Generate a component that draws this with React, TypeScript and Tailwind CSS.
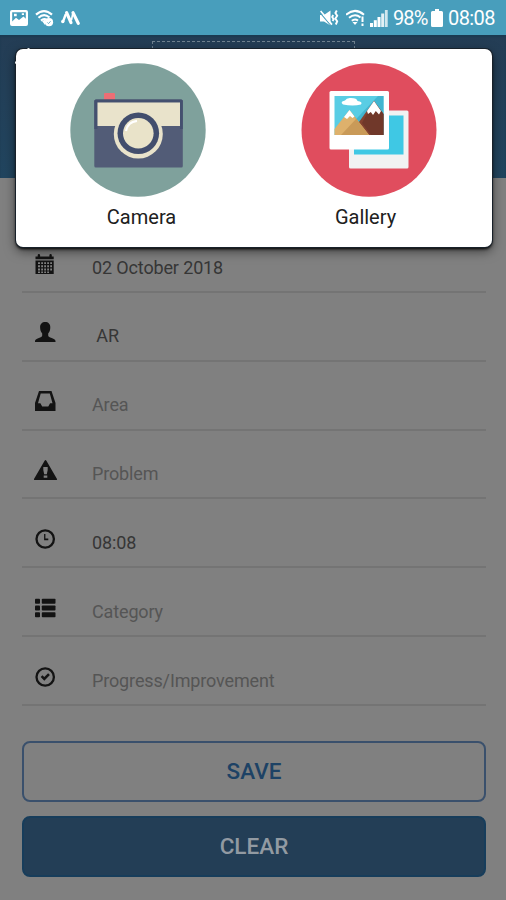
import type { ReactNode } from "react";

interface Field {
  id: string;
  text: string;
  filled: boolean;
  icon: ReactNode;
}

const fields: Field[] = [
  {
    id: "date",
    text: "02 October 2018",
    filled: true,
    icon: (
      <>
        <path d="M.5 2.5H2.7V1.2Q2.7 0 3.9 0T5.1 1.2V2.5H14.4V1.2Q14.4 0 15.6 0T16.8 1.2V2.5H18.7V5.3H.5Z" />
        <path
          fillRule="evenodd"
          d="M.5 6.6H18.7V20H.5ZM3 8.2V10H5V8.2ZM6.2 8.2V10H8V8.2ZM9.2 8.2V10H11V8.2ZM12.2 8.2V10H14V8.2ZM15.2 8.2V10H17V8.2ZM3 11.3V13.2H5V11.3ZM6.2 11.3V13.2H8V11.3ZM9.2 11.3V13.2H11V11.3ZM12.2 11.3V13.2H14V11.3ZM15.2 11.3V13.2H17V11.3ZM3 14.6V16.4H5V14.6ZM6.2 14.6V16.4H8V14.6ZM9.2 14.6V16.4H11V14.6ZM12.2 14.6V16.4H14V14.6ZM15.2 14.6V16.4H17V14.6ZM3 17.6V19H5V17.6ZM6.2 17.6V19H8V17.6ZM9.2 17.6V19H11V17.6ZM12.2 17.6V19H14V17.6Z"
        />
      </>
    ),
  },
  {
    id: "user",
    text: "\u00a0AR",
    filled: true,
    icon: (
      <path d="M10.2 0C7 0 5.1 2 5.1 5.2C5.1 8 6 10 7.2 11.5V13.5C7 14.5 6.5 15 4.5 15.7C1.8 16.7 0 17.5 0 19V20H20.5V19C20.5 17.5 18.7 16.7 16 15.7C14 15 13.4 14.5 13.2 13.5V11.5C14.5 10 15.3 8 15.3 5.2C15.3 2 13.4 0 10.2 0Z" />
    ),
  },
  {
    id: "area",
    text: "Area",
    filled: false,
    icon: (
      <path
        fillRule="evenodd"
        d="M4 0H16.5L20.5 12V20H0V12ZM5.7 2.6L3 12.2H5.4L7.2 15.6H13.3L15.1 12.2H17.5L14.8 2.6Z"
      />
    ),
  },
  {
    id: "problem",
    text: "Problem",
    filled: false,
    icon: (
      <path
        fillRule="evenodd"
        d="M10.5 0Q11 0 11.4.8L22 19Q22.4 20 21.5 20H-.5Q-1.4 20-1 19L9.6.8Q10 0 10.5 0ZM8.3 7V10L9.2 14.3H11.8L12.7 10V7ZM8.7 15.5V17.8H12.3V15.5Z"
      />
    ),
  },
  {
    id: "time",
    text: "08:08",
    filled: true,
    icon: (
      <>
        <circle cx="10.2" cy="10" r="8.7" fill="none" stroke="currentColor" strokeWidth="2.3" />
        <path d="M9.1 5H10.4V9.6H13.3V11.2H9.1Z" />
      </>
    ),
  },
  {
    id: "category",
    text: "Category",
    filled: false,
    icon: (
      <>
        <rect x="0" y="0.8" width="5" height="5" rx="0.8" />
        <rect x="6.8" y="0.8" width="13.7" height="5" rx="0.8" />
        <rect x="0" y="7.5" width="5" height="5" rx="0.8" />
        <rect x="6.8" y="7.5" width="13.7" height="5" rx="0.8" />
        <rect x="0" y="14.2" width="5" height="5" rx="0.8" />
        <rect x="6.8" y="14.2" width="13.7" height="5" rx="0.8" />
      </>
    ),
  },
  {
    id: "progress",
    text: "Progress/Improvement",
    filled: false,
    icon: (
      <>
        <circle cx="10.2" cy="10" r="8.7" fill="none" stroke="currentColor" strokeWidth="2.3" />
        <path d="M5.7 9.9L7.4 8.2L9.3 10.1L13.1 6.3L14.9 8.1L9.3 13.8Z" />
      </>
    ),
  },
];

function StatusBar() {
  return (
    <div className="flex h-[35px] items-center justify-between bg-[#489ebc] pr-[11px] pl-[10px] text-white">
      <div className="flex items-center gap-[7px]">
        {/* picture */}
        <svg width="18" height="16" viewBox="0 0 18 16" fill="currentColor">
          <path
            fillRule="evenodd"
            d="M2 0H16Q18 0 18 2V14Q18 16 16 16H2Q0 16 0 14V2Q0 0 2 0ZM2.2 2.3V11.5L6 7.8L9 10L13.5 6.5L15.8 8.7V2.3Z"
          />
          <path d="M4 3.7H6.7V6.2H4ZM11.8 3.2H14V5H11.8Z" />
        </svg>
        {/* wifi with badge */}
        <svg width="19" height="18" viewBox="0 0 19 18" fill="none" stroke="currentColor" strokeWidth="2.2">
          <path d="M1 5.6Q9 -1.4 17 5.6M3.5 8.7Q9 3.8 14.5 8.5M6 11.6Q9 9 12 11.2" />
          <path d="M7 12L10 10.7V16Z" fill="currentColor" stroke="none" />
          <circle cx="14" cy="13.2" r="4.1" fill="currentColor" stroke="none" />
          <path d="M12.3 13.4L13.5 14.6L15.6 12.2" stroke="#489ebc" strokeWidth="0.8" />
        </svg>
        <svg width="20" height="16" viewBox="0 0 20 16" fill="none" stroke="currentColor" strokeLinecap="round">
          <path d="M5.6 2.6L10 12.6M12 2.6L17.3 13.4" strokeWidth="3.2" />
          <path d="M4.6 4.8L2 11.6" strokeWidth="2.4" />
          <path d="M1.8 11.5V11.6" strokeWidth="3.4" />
          <path d="M11.6 4L10.6 9.5" strokeWidth="1.6" />
        </svg>
      </div>
      <div className="flex items-center">
        {/* muted / vibrate */}
        <svg width="19" height="18" viewBox="0 0 19 18" className="mr-[7px] ml-[2px]" fill="currentColor">
          <path d="M0 6H4L10.5 1.5V16.5L4 12.5H0Z" />
          <path d="M0 3.6L11 16.6" stroke="#489ebc" strokeWidth="1.1" />
          <path d="M.6 2L12 15.6" stroke="currentColor" strokeWidth="1.7" />
          <path d="M13.2 6L12.2 8L13.6 10.2L12.6 12M16.8 1.5L15.4 4L17.2 6.8L15.4 9.6L17.2 12.4L15.8 15.5" fill="none" stroke="currentColor" strokeWidth="1.9" />
        </svg>
        {/* wifi */}
        <svg width="20" height="18" viewBox="0 0 20 18" className="mr-[4px]" fill="none" stroke="currentColor" strokeWidth="2">
          <path d="M0 5.8Q9 -2 18 5.8M3 8.8Q9 3.8 14.5 8.4M5.8 11.8Q9 9.2 12 11.6" />
          <path d="M6.5 13H11.5L9 16Z" fill="currentColor" stroke="none" />
          <path d="M16.5 7.5V13M16.5 14.5V17" />
        </svg>
        {/* signal */}
        <svg width="18" height="18" viewBox="0 0 18 18" className="mr-[5px]" fill="currentColor">
          <rect x="0" y="14" width="3" height="4" />
          <rect x="3.8" y="11.2" width="3" height="6.8" />
          <rect x="7.5" y="8" width="3" height="10" />
          <rect x="11.2" y="4.5" width="3" height="13.5" opacity="0.85" />
          <rect x="14.9" y="1" width="2.8" height="17" opacity="0.75" />
        </svg>
        <span className="w-[38px] text-[20px] leading-none tracking-[-0.9px]">98%</span>
        {/* battery */}
        <svg width="12" height="18" viewBox="0 0 12 18" className="mr-[5px]" fill="currentColor">
          <path d="M4 0H8V2H10.5Q12 2 12 3.5V16.5Q12 18 10.5 18H1.5Q0 18 0 16.5V3.5Q0 2 1.5 2H4Z" />
        </svg>
        <span className="w-[47px] text-[20px] leading-none tracking-[-0.6px]">08:08</span>
      </div>
    </div>
  );
}

function CameraIcon() {
  return (
    <svg width="136" height="134" viewBox="0 0 136 134">
      <ellipse cx="68" cy="67" rx="67.7" ry="66.7" fill="#7fa19c" />
      <rect x="34" y="30" width="11" height="8" rx="1" fill="#ed6e75" />
      <rect x="24.3" y="36.5" width="88.5" height="68" rx="1.5" fill="#525c77" />
      <path d="M24.3 38Q24.3 36.5 26 36.5H111Q112.8 36.5 112.8 38V66H110V39.5H27.5V66H24.3Z" fill="#44506f" />
      <rect x="27.5" y="39.5" width="82.5" height="23.5" fill="#e9e3cb" />
      <circle cx="68.3" cy="71" r="24.5" fill="#e9e3cb" />
      <circle cx="68.3" cy="70.3" r="20.8" fill="#424e6d" />
      <circle cx="68.3" cy="70.3" r="15.3" fill="#e9e3c9" />
      <path d="M56 68Q57.5 59 67 57.8" fill="none" stroke="#fff" strokeWidth="2.2" />
    </svg>
  );
}

function GalleryIcon() {
  return (
    <svg width="136" height="134" viewBox="0 0 136 134">
      <ellipse cx="68" cy="67" rx="67.5" ry="66.7" fill="#e04d5e" />
      {/* back photo */}
      <rect x="48" y="47.5" width="59.5" height="58" rx="1.5" fill="#f1f2f2" />
      <rect x="53" y="52.5" width="49.5" height="39" fill="#3fc8e4" />
      {/* front photo */}
      <rect x="28.5" y="28" width="59.5" height="58.5" rx="1.5" fill="#fff" />
      <rect x="33.5" y="33" width="49" height="39" fill="#59cde4" />
      <path d="M77 33H82.5V72H40Z" fill="#42b5d0" />
      <path d="M58 59L73 38L82.5 51V72H58Z" fill="#84422f" />
      <path d="M73 38L82.5 51V72H70L61 60Z" fill="#70382a" />
      <path d="M73 38L80 48L78 51.5L74.8 48L72 52L69.8 49L67 51L66 48Z" fill="#fff" />
      <path d="M33.5 66L48.5 47L68 72H33.5Z" fill="#deb16c" />
      <path d="M48.5 47L55 56L40 72H68Z" fill="#c99a58" />
      <path d="M48.5 47L53.5 53.5L51.5 55L49 53L46 56L43 54Z" fill="#fff" />
      <path d="M42 41.5Q38.5 38.5 44 37.5Q45.5 34.5 50 35Q56 35 56.5 38Q62 38.5 60 41.5Q52 43.5 42 41.5Z" fill="#fff" />
    </svg>
  );
}

export default function App() {
  return (
    <main className="relative h-[900px] w-[506px] overflow-hidden bg-[#808080] font-['Roboto',sans-serif]">
      <StatusBar />

      <header className="h-[143px] bg-linear-to-b from-[#243d55] to-[#21455f] px-[152px] pt-[6px] shadow-[inset_0_2px_2px_#1b3a52]">
        <div className="h-[110px] w-[203px] border border-dashed border-[#6f8290]" />
      </header>

      <section className="pt-[46px] pr-[20px] pl-[22px]">
        {fields.map((field) => (
          <div
            key={field.id}
            className="flex h-[68.85px] items-start border-b-2 border-[#747474] pl-[13px]"
          >
            <svg
              width="21"
              height="20"
              viewBox="0 0 21 20"
              fill="currentColor"
              className="mt-[29.5px] overflow-visible text-[#131313]"
            >
              {field.icon}
            </svg>
            <span
              className={
                field.filled
                  ? "mt-[31.5px] ml-[36px] text-[18px] leading-6 tracking-[-0.14px] text-[#363636]"
                  : "mt-[31.5px] ml-[36px] text-[18px] leading-6 tracking-[-0.14px] text-[#555555]"
              }
            >
              {field.text}
            </span>
          </div>
        ))}

        <button className="mt-[35px] h-[61px] w-full rounded-lg border-2 border-[#3a506c] text-[22.5px] font-medium text-[#1d4265]">
          SAVE
        </button>
        <button className="mt-[14px] h-[61px] w-full rounded-lg border-2 border-[#173d5b] bg-[#233e56] text-[22.5px] font-medium text-[#929aa2]">
          CLEAR
        </button>
      </section>

      {/* image source dialog */}
      <div className="absolute top-[49px] left-[16px] flex h-[198px] w-[476px] rounded-[7px] bg-white shadow-[0_0_0_1px_#18212a,0_2px_3px_#000,0_4px_12px_rgba(0,0,0,0.55)]">
        <div className="flex w-[244px] flex-col items-center pt-[14px]">
          <CameraIcon />
          <span className="mt-[8px] ml-[7px] text-[20px] leading-6 text-[#202020]">Camera</span>
        </div>
        <div className="flex w-[218px] flex-col items-center pt-[14px]">
          <GalleryIcon />
          <span className="mt-[8px] mr-[7px] text-[20px] leading-6 text-[#202020]">Gallery</span>
        </div>
        {/* light specks on the rounded corner */}
        <div className="absolute -top-px left-[11px] h-[3px] w-[3px] rounded-full bg-white" />
        <div className="absolute top-[12px] -left-px h-[3px] w-[3px] rounded-full bg-white" />
      </div>
    </main>
  );
}
